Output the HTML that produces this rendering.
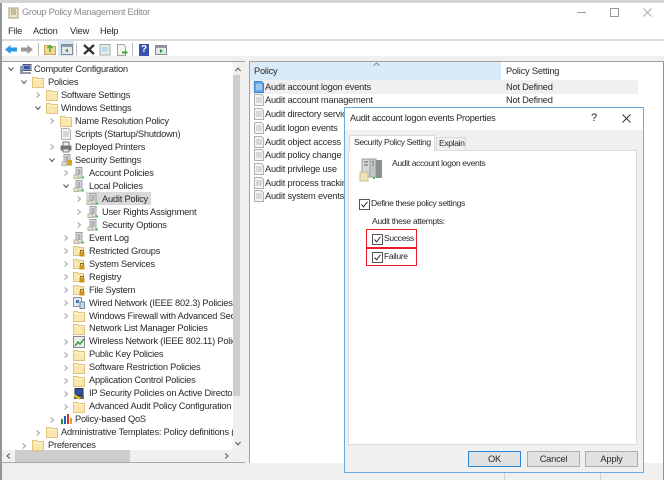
<!DOCTYPE html>
<html><head><meta charset="utf-8"><style>
html,body{margin:0;padding:0;background:#fff}
#r{position:relative;width:664px;height:480px;overflow:hidden;background:#f0f0f0;font:9.3px "Liberation Sans",sans-serif;letter-spacing:-.22px;color:#2a2a2a;filter:blur(.3px)}
#r div,#r svg{position:absolute}
.t{white-space:nowrap;line-height:13px;height:13px}
.d{font-size:8.6px;letter-spacing:-.38px}
.a{width:6px;height:6px}
.i{width:12px;height:12px}
</style></head><body><div id="r">
<svg width="0" height="0" style="position:absolute"><defs>
<symbol id="folder" viewBox="0 0 12 12"><path d="M.5 1.500h4l1 1h6v9h-11z" fill="#fae7ad" stroke="#e0c47c"/><path d="M1 3.500h10" stroke="#fdf3d2"/></symbol>
<symbol id="lock" viewBox="0 0 12 12"><path d="M.5 1.500h4l1 1h5v8h-10z" fill="#fae7ad" stroke="#e0c47c"/><rect x="6.500" y="7" width="5" height="4.500" fill="#c9961e"/><path d="M7.500 7V5.500h3V7" fill="none" stroke="#8a6a20"/></symbol>
<symbol id="pol" viewBox="0 0 12 12"><rect x="3" y=".5" width="6" height="10.500" fill="#dfe2e2" stroke="#9aa0a0"/><path d="M4.500 3h3M4.500 5h3M4.500 7h3" stroke="#777e7e"/><rect x="1" y="8" width="4" height="3.500" fill="#eee5c0" stroke="#b5b5a5"/><rect x="9" y="9.500" width="2" height="2" fill="#4fc04f"/></symbol>
<symbol id="doc" viewBox="0 0 12 12"><path d="M1.500.5h7l2 2v9h-9z" fill="#f4f4f4" stroke="#b0b0b0"/><path d="M3 4h6M3 6h6M3 8h6" stroke="#bbb"/></symbol>
<symbol id="docb" viewBox="0 0 12 12"><path d="M1.500.5h7l2 2v9h-9z" fill="#68a8e8" stroke="#3c85d0"/><path d="M3 4h6M3 6h6M3 8h6" stroke="#d5e8fa"/></symbol>
<symbol id="right" viewBox="0 0 6 6"><path d="M1.500.5L4.500 3 1.500 5.500" fill="none" stroke="#a0a0a0"/></symbol>
<symbol id="down" viewBox="0 0 6 6"><path d="M.5 1.500L3 4.500 5.500 1.500" fill="none" stroke="#555"/></symbol>
<symbol id="chk" viewBox="0 0 11 11"><rect x=".5" y=".5" width="10" height="10" fill="#fff" stroke="#555"/><path d="M2.500 5.500l2 2.300 4-5" fill="none" stroke="#333"/></symbol>
</defs></svg>

<!-- outer -->
<div style="left:0;top:0;width:664px;height:3px;background:#d4d4d4"></div>
<div style="left:0;top:3px;width:2px;height:477px;background:#8f949a"></div>
<div style="left:2px;top:3px;width:662px;height:36px;background:#fff"></div>
<svg class="i" style="left:7px;top:7px;width:12px;height:12px"><path d="M2 1h9v10H2z" fill="#efe6c8" stroke="#a89c78"/><path d="M4 3h5M4 5h5M4 7h5" stroke="#9a9070"/></svg>
<div class="t" style="left:22px;top:6px;color:#8a8a8a;letter-spacing:-.3px">Group Policy Management Editor</div>
<div style="left:577px;top:12px;width:9px;height:1px;background:#999"></div>
<div style="left:610px;top:8px;width:7px;height:7px;border:1px solid #999"></div>
<svg style="left:643px;top:8px;width:9px;height:9px"><path d="M.5.500l8 8M8.500.500l-8 8" stroke="#aaa"/></svg>
<div class="t" style="left:8px;top:25px">File</div>
<div class="t" style="left:33px;top:25px">Action</div>
<div class="t" style="left:70px;top:25px">View</div>
<div class="t" style="left:100px;top:25px">Help</div>
<div style="left:2px;top:39px;width:662px;height:2px;background:#dcdcdc"></div>
<div style="left:2px;top:41px;width:662px;height:15px;background:#fff"></div>
<div style="left:2px;top:56px;width:662px;height:5px;background:#f0f0f0"></div>

<!-- toolbar -->
<svg style="left:5px;top:44px;width:12px;height:11px"><path d="M0 5.500L5.500 1v2.500H12v4H5.500V10z" fill="#2b9ae6"/></svg>
<svg style="left:21px;top:44px;width:12px;height:11px"><path d="M12 5.500L6.500 1v2.500H0v4h6.500V10z" fill="#9a9a9a"/></svg>
<div style="left:38px;top:43px;width:1px;height:13px;background:#bbb"></div>
<svg style="left:44px;top:43px;width:12px;height:12px"><path d="M.5 2.500h4l1 1h6v8h-11z" fill="#f3d98c" stroke="#c8a860"/><path d="M6 9V3M3.500 5L6 2.500 8.500 5" fill="none" stroke="#3fae3f" stroke-width="1.500"/></svg>
<div style="left:58px;top:41px;width:16px;height:15px;background:#d5e8f8"></div>
<svg style="left:61px;top:44px;width:12px;height:11px"><rect x=".5" y=".5" width="11" height="10" fill="#e8e8e8" stroke="#7f8a94"/><rect x="1" y="1" width="10" height="2" fill="#8f9aa5"/><path d="M7 4.500v4L4 6.500z" fill="#2f9a45"/></svg>
<div style="left:76px;top:43px;width:1px;height:13px;background:#bbb"></div>
<svg style="left:83px;top:44px;width:12px;height:11px"><path d="M1 1l10 9M11 1L1 10" stroke="#333" stroke-width="2.400"/></svg>
<svg style="left:99px;top:44px;width:12px;height:12px"><rect x="1" y=".5" width="10" height="10.500" fill="#e6eef0" stroke="#a5a5a5"/><rect x="3" y="3" width="6" height="5" fill="#b9dcec"/></svg>
<svg style="left:116px;top:44px;width:13px;height:12px"><path d="M1.500.5h6l2 2v9h-8z" fill="#f4f4f0" stroke="#a5a5a5"/><path d="M6 7.500h3V6l3 2.500L9 11V9.500H6z" fill="#45a845"/></svg>
<div style="left:132px;top:43px;width:1px;height:13px;background:#bbb"></div>
<div style="left:139px;top:44px;width:10px;height:12px;background:#3a50b0;color:#fff;font:bold 10px/12px 'Liberation Sans',sans-serif;text-align:center">?</div>
<svg style="left:155px;top:45px;width:12px;height:10px"><rect x=".5" y=".5" width="11" height="9" fill="#e8e8e8" stroke="#7f8a94"/><rect x="1" y="1" width="10" height="2" fill="#8f9aa5"/><path d="M5 4v4l3-2z" fill="#2f9a45"/></svg>

<!-- left pane -->
<div style="left:2px;top:61px;width:243px;height:402px;background:#fff;border-top:1px solid #a0a0a0;box-sizing:border-box"></div>
<div style="left:233px;top:62px;width:12px;height:388px;background:#f0f0f0"></div>
<div style="left:233px;top:75px;width:7px;height:321px;background:#cdcdcd"></div>
<svg style="left:235px;top:67px;width:6px;height:5px"><path d="M.5 4L3 1 5.500 4" fill="none" stroke="#555"/></svg>
<svg style="left:235px;top:441px;width:6px;height:5px"><path d="M.5 1L3 4 5.500 1" fill="none" stroke="#555"/></svg>
<div style="left:2px;top:450px;width:243px;height:13px;background:#f0f0f0"></div>
<div style="left:15px;top:450px;width:115px;height:12px;background:#cdcdcd"></div>
<svg style="left:6px;top:453px;width:5px;height:6px"><path d="M4 .5L1 3l3 2.500" fill="none" stroke="#555"/></svg>
<svg style="left:224px;top:453px;width:5px;height:6px"><path d="M1 .5L4 3 1 5.500" fill="none" stroke="#555"/></svg>
<div style="left:0;top:462px;width:664px;height:1px;background:#a8a8a8"></div>
<div style="left:245px;top:61px;width:4px;height:402px;background:#f0f0f0"></div>

<!-- tree -->
<svg class="a" style="left:8px;top:66px"><use href="#down"/></svg>
<svg class="i" style="left:19px;top:64px;width:13px;height:11px"><rect x="4" y=".5" width="8" height="6" fill="#e8e8f0" stroke="#556"/><rect x="5" y="1.500" width="6" height="4" fill="#2f55b5"/><rect x="1" y="2" width="3" height="8" fill="#8a94a8"/><rect x="3" y="8" width="9" height="2" fill="#99a"/></svg>
<div class="t" style="left:34px;top:63px">Computer Configuration</div>
<svg class="a" style="left:21px;top:79px"><use href="#down"/></svg>
<svg class="i" style="left:32px;top:76px"><use href="#folder"/></svg>
<div class="t" style="left:48px;top:76px">Policies</div>
<svg class="a" style="left:35px;top:92px"><use href="#right"/></svg>
<svg class="i" style="left:46px;top:89px"><use href="#folder"/></svg>
<div class="t" style="left:61px;top:89px">Software Settings</div>
<svg class="a" style="left:35px;top:105px"><use href="#down"/></svg>
<svg class="i" style="left:46px;top:102px"><use href="#folder"/></svg>
<div class="t" style="left:61px;top:102px">Windows Settings</div>
<svg class="a" style="left:49px;top:118px"><use href="#right"/></svg>
<svg class="i" style="left:60px;top:115px"><use href="#folder"/></svg>
<div class="t" style="left:75px;top:115px">Name Resolution Policy</div>
<svg class="i" style="left:60px;top:128px"><use href="#doc"/></svg>
<div class="t" style="left:75px;top:128px">Scripts (Startup/Shutdown)</div>
<svg class="a" style="left:49px;top:144px"><use href="#right"/></svg>
<svg class="i" style="left:60px;top:141px"><rect x="3" y="1" width="6" height="4" fill="#eee" stroke="#777"/><rect x=".5" y="4.500" width="11" height="5" fill="#777"/><rect x="3" y="8" width="6" height="3" fill="#eee" stroke="#777"/></svg>
<div class="t" style="left:75px;top:141px">Deployed Printers</div>
<svg class="a" style="left:49px;top:157px"><use href="#down"/></svg>
<svg class="i" style="left:61px;top:154px"><use href="#pol"/><rect x="6" y="6" width="5" height="5" fill="#d8a420"/></svg>
<div class="t" style="left:75px;top:154px">Security Settings</div>
<svg class="a" style="left:63px;top:170px"><use href="#right"/></svg>
<svg class="i" style="left:73px;top:167px"><use href="#pol"/></svg>
<div class="t" style="left:89px;top:167px">Account Policies</div>
<svg class="a" style="left:63px;top:183px"><use href="#down"/></svg>
<svg class="i" style="left:73px;top:180px"><use href="#pol"/></svg>
<div class="t" style="left:89px;top:180px">Local Policies</div>
<svg class="a" style="left:76px;top:196px"><use href="#right"/></svg>
<div style="left:86px;top:192px;width:65px;height:13px;background:#d9d9d9"></div>
<svg class="i" style="left:87px;top:193px"><use href="#pol"/></svg>
<div class="t" style="left:102px;top:193px">Audit Policy</div>
<svg class="a" style="left:76px;top:209px"><use href="#right"/></svg>
<svg class="i" style="left:87px;top:206px"><use href="#pol"/></svg>
<div class="t" style="left:102px;top:206px">User Rights Assignment</div>
<svg class="a" style="left:76px;top:222px"><use href="#right"/></svg>
<svg class="i" style="left:87px;top:219px"><use href="#pol"/></svg>
<div class="t" style="left:102px;top:219px">Security Options</div>
<svg class="a" style="left:63px;top:235px"><use href="#right"/></svg>
<svg class="i" style="left:73px;top:232px"><use href="#pol"/></svg>
<div class="t" style="left:89px;top:232px">Event Log</div>
<svg class="a" style="left:63px;top:248px"><use href="#right"/></svg>
<svg class="i" style="left:73px;top:245px"><use href="#lock"/></svg>
<div class="t" style="left:89px;top:245px">Restricted Groups</div>
<svg class="a" style="left:63px;top:261px"><use href="#right"/></svg>
<svg class="i" style="left:73px;top:258px"><use href="#lock"/></svg>
<div class="t" style="left:89px;top:258px">System Services</div>
<svg class="a" style="left:63px;top:274px"><use href="#right"/></svg>
<svg class="i" style="left:73px;top:271px"><use href="#lock"/></svg>
<div class="t" style="left:89px;top:271px">Registry</div>
<svg class="a" style="left:63px;top:287px"><use href="#right"/></svg>
<svg class="i" style="left:73px;top:284px"><use href="#lock"/></svg>
<div class="t" style="left:89px;top:284px">File System</div>
<svg class="a" style="left:63px;top:300px"><use href="#right"/></svg>
<svg class="i" style="left:73px;top:297px"><rect x=".5" y=".5" width="8" height="9" fill="#e4e8ec" stroke="#8a929a"/><rect x="3" y="3" width="3" height="3" fill="#4a78b0"/><rect x="7" y="5" width="4.500" height="6.500" fill="#cfd6dc" stroke="#6a8aa8"/></svg>
<div class="t" style="left:89px;top:297px">Wired Network (IEEE 802.3) Policies</div>
<svg class="a" style="left:63px;top:313px"><use href="#right"/></svg>
<svg class="i" style="left:73px;top:310px"><use href="#folder"/></svg>
<div class="t" style="left:89px;top:310px;width:144px;overflow:hidden">Windows Firewall with Advanced Security</div>
<svg class="i" style="left:73px;top:323px"><use href="#folder"/></svg>
<div class="t" style="left:89px;top:322px">Network List Manager Policies</div>
<svg class="a" style="left:63px;top:339px"><use href="#right"/></svg>
<svg class="i" style="left:73px;top:336px"><rect x=".5" y=".5" width="11" height="11" fill="#e8f0e8" stroke="#889"/><path d="M2 10l3-4 2 2 4-5" fill="none" stroke="#3a9a4a" stroke-width="1.500"/></svg>
<div class="t" style="left:89px;top:335px;width:144px;overflow:hidden">Wireless Network (IEEE 802.11) Policies</div>
<svg class="a" style="left:63px;top:352px"><use href="#right"/></svg>
<svg class="i" style="left:73px;top:349px"><use href="#folder"/></svg>
<div class="t" style="left:89px;top:348px">Public Key Policies</div>
<svg class="a" style="left:63px;top:365px"><use href="#right"/></svg>
<svg class="i" style="left:73px;top:362px"><use href="#folder"/></svg>
<div class="t" style="left:89px;top:361px">Software Restriction Policies</div>
<svg class="a" style="left:63px;top:378px"><use href="#right"/></svg>
<svg class="i" style="left:73px;top:375px"><use href="#folder"/></svg>
<div class="t" style="left:89px;top:374px">Application Control Policies</div>
<svg class="a" style="left:63px;top:391px"><use href="#right"/></svg>
<svg class="i" style="left:73px;top:388px"><rect x="2" y=".5" width="8" height="7" fill="#2f4fa5" stroke="#333"/><rect x="1" y="8" width="10" height="3" fill="#666"/><path d="M1 7l6 4" stroke="#e8d020" stroke-width="2"/></svg>
<div class="t" style="left:89px;top:387px;width:144px;overflow:hidden">IP Security Policies on Active Directory (</div>
<svg class="a" style="left:63px;top:404px"><use href="#right"/></svg>
<svg class="i" style="left:73px;top:401px"><use href="#folder"/></svg>
<div class="t" style="left:89px;top:400px;width:144px;overflow:hidden">Advanced Audit Policy Configuration</div>
<svg class="a" style="left:49px;top:417px"><use href="#right"/></svg>
<svg class="i" style="left:60px;top:413px"><rect x="1" y="6" width="2" height="5" fill="#2a8a3a"/><rect x="4" y="3" width="2" height="8" fill="#1f5fc0"/><rect x="7" y="1" width="2" height="10" fill="#d03030"/><rect x="10" y="5" width="2" height="6" fill="#e0a020"/></svg>
<div class="t" style="left:75px;top:413px">Policy-based QoS</div>
<svg class="a" style="left:35px;top:430px"><use href="#right"/></svg>
<svg class="i" style="left:46px;top:426px"><use href="#folder"/></svg>
<div class="t" style="left:61px;top:426px;width:172px;overflow:hidden">Administrative Templates: Policy definitions (ADMX</div>
<svg class="a" style="left:21px;top:443px"><use href="#right"/></svg>
<svg class="i" style="left:32px;top:439px"><use href="#folder"/></svg>
<div class="t" style="left:48px;top:439px">Preferences</div>

<!-- right pane -->
<div style="left:249px;top:61px;width:415px;height:402px;background:#fff;border:1px solid #a0a0a0;border-bottom:0;box-sizing:border-box"></div>
<div style="left:250px;top:62px;width:251px;height:18px;background:#d9ebf9"></div>
<svg style="left:373px;top:62px;width:7px;height:4px"><path d="M.5 3.500L3.500 1 6.500 3.500" fill="none" stroke="#888"/></svg>
<div class="t" style="left:254px;top:65px">Policy</div>
<div class="t" style="left:506px;top:65px">Policy Setting</div>
<div style="left:250px;top:80px;width:388px;height:14px;background:#f0f0f0"></div>
<svg class="i" style="left:253px;top:81px"><use href="#docb"/></svg>
<div class="t" style="left:265px;top:81px">Audit account logon events</div>
<div class="t" style="left:506px;top:81px">Not Defined</div>
<svg class="i" style="left:253px;top:94px"><use href="#doc"/></svg>
<div class="t" style="left:265px;top:94px">Audit account management</div>
<div class="t" style="left:506px;top:94px">Not Defined</div>
<svg class="i" style="left:253px;top:108px"><use href="#doc"/></svg>
<div class="t" style="left:265px;top:108px">Audit directory service access</div>
<svg class="i" style="left:253px;top:122px"><use href="#doc"/></svg>
<div class="t" style="left:265px;top:122px">Audit logon events</div>
<svg class="i" style="left:253px;top:136px"><use href="#doc"/></svg>
<div class="t" style="left:265px;top:136px">Audit object access</div>
<svg class="i" style="left:253px;top:149px"><use href="#doc"/></svg>
<div class="t" style="left:265px;top:149px">Audit policy change</div>
<svg class="i" style="left:253px;top:163px"><use href="#doc"/></svg>
<div class="t" style="left:265px;top:163px">Audit privilege use</div>
<svg class="i" style="left:253px;top:177px"><use href="#doc"/></svg>
<div class="t" style="left:265px;top:177px">Audit process tracking</div>
<svg class="i" style="left:253px;top:190px"><use href="#doc"/></svg>
<div class="t" style="left:265px;top:190px">Audit system events</div>

<!-- dialog -->
<div style="left:344px;top:107px;width:300px;height:366px;background:#f0f0f0;border:1px solid #6aaae0;box-sizing:border-box"></div>
<div style="left:345px;top:108px;width:298px;height:22px;background:#fff"></div>
<div class="t" style="left:350px;top:112px;letter-spacing:-.3px">Audit account logon events Properties</div>
<div class="t" style="left:591px;top:112px;font-size:11px">?</div>
<svg style="left:622px;top:114px;width:9px;height:9px"><path d="M.5.500l8 8M8.500.500l-8 8" stroke="#333"/></svg>
<div style="left:348px;top:150px;width:289px;height:295px;background:#fff;border:1px solid #dcdcdc;box-sizing:border-box"></div>
<div style="left:349px;top:135px;width:86px;height:16px;background:#fff;border:1px solid #d9d9d9;border-bottom:0;box-sizing:border-box"></div>
<div class="t d" style="left:354px;top:136px">Security Policy Setting</div>
<div style="left:436px;top:137px;width:30px;height:13px;background:#f0f0f0;border:1px solid #d9d9d9;border-bottom:0;box-sizing:border-box"></div>
<div class="t d" style="left:439px;top:137px">Explain</div>
<svg style="left:359px;top:158px;width:24px;height:25px"><rect x="3" y="1" width="8" height="18" fill="#d4d8d8" stroke="#9aa0a0"/><rect x="11" y="1" width="6" height="18" fill="#c2c6c6" stroke="#9aa0a0"/><rect x="17" y="2" width="6" height="18" fill="#8a9090"/><path d="M5 4h4M5 7h4M13 4h2M13 7h2" stroke="#667"/><rect x="1" y="14" width="8" height="9" fill="#eee3b4" stroke="#c8bd90"/><rect x="14" y="19" width="2" height="2" fill="#4fc04f"/></svg>
<div class="t d" style="left:392px;top:157px">Audit account logon events</div>
<svg style="left:359px;top:199px;width:11px;height:11px"><use href="#chk"/></svg>
<div class="t d" style="left:371px;top:197px">Define these policy settings</div>
<div class="t d" style="left:372px;top:215px">Audit these attempts:</div>
<div style="left:366px;top:229px;width:51px;height:19px;border:1px solid #e8202a;box-sizing:border-box"></div>
<div style="left:366px;top:248px;width:51px;height:18px;border:1px solid #e8202a;box-sizing:border-box"></div>
<svg style="left:372px;top:234px;width:11px;height:11px"><use href="#chk"/></svg>
<div class="t d" style="left:384px;top:232px">Success</div>
<svg style="left:372px;top:252px;width:11px;height:11px"><use href="#chk"/></svg>
<div class="t d" style="left:384px;top:250px">Failure</div>
<div class="t" style="left:468px;top:451px;width:53px;height:16px;line-height:15px;text-align:center;background:#e1e1e1;border:1px solid #2d86d4;box-sizing:border-box">OK</div>
<div class="t" style="left:527px;top:451px;width:53px;height:16px;line-height:15px;text-align:center;background:#e1e1e1;border:1px solid #adadad;box-sizing:border-box">Cancel</div>
<div class="t" style="left:585px;top:451px;width:53px;height:16px;line-height:15px;text-align:center;background:#e1e1e1;border:1px solid #adadad;box-sizing:border-box">Apply</div>
<div style="left:504px;top:473px;width:1px;height:7px;background:#d0d0d0"></div>
<div style="left:600px;top:473px;width:1px;height:7px;background:#d0d0d0"></div>
<div style="left:663px;top:62px;width:1px;height:418px;background:#8f949a"></div>
</div></body></html>
